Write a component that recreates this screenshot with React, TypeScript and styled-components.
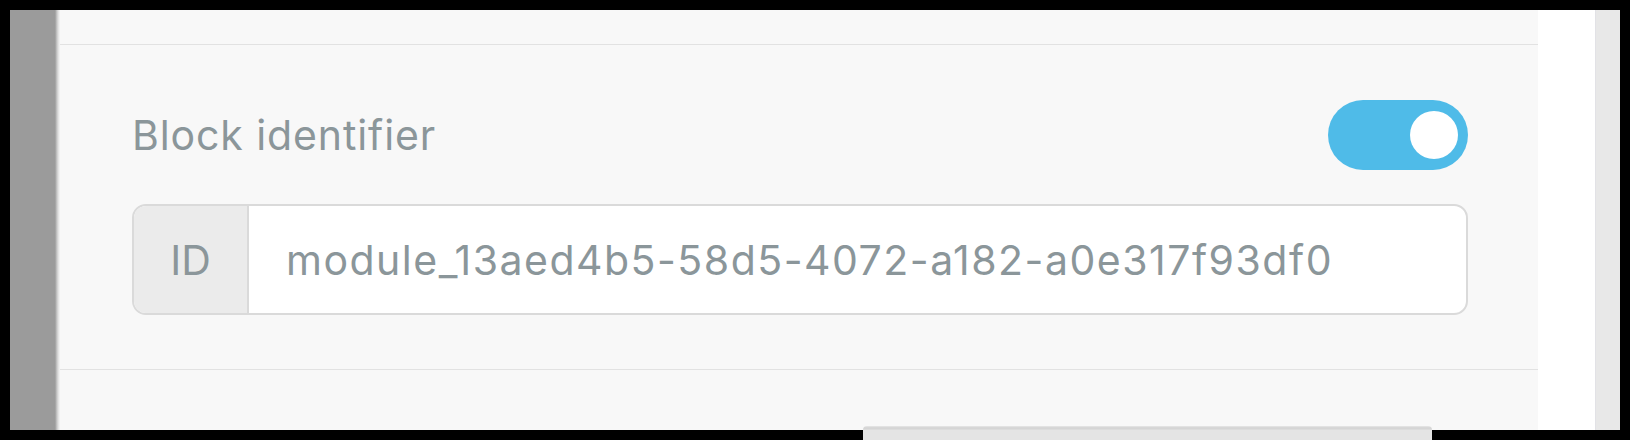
import React from "react";
import styled, { createGlobalStyle } from "styled-components";

const Global = createGlobalStyle`
  html, body { margin: 0; padding: 0; background: #000; }
  body { font-family: Inter, "Noto Sans", sans-serif; }
  * { box-sizing: border-box; }
`;

const Frame = styled.div`
  width: 1630px;
  height: 440px;
  padding: 10px;
  background: #000;
  display: flex;
  overflow: hidden;
`;

const Rail = styled.div`
  width: 50px;
  flex: none;
  background: linear-gradient(to right, #9b9b9b 0, #9b9b9b 45px, #c9c9c9 47px, #ececec 49px, #f4f4f4 50px);
`;

const Panel = styled.div`
  width: 1478px;
  flex: none;
  background: #f8f8f8;
  display: flex;
  flex-direction: column;
`;

const Gutter = styled.div`
  width: 57px;
  flex: none;
  background: #fff;
`;

const Scrollbar = styled.div`
  width: 25px;
  flex: none;
  background: #e8e8e8;
  border-left: 1px solid #e2e2e6;
`;

const TopSection = styled.div`
  height: 35px;
  flex: none;
  border-bottom: 1px solid #e2e2e2;
`;

const Section = styled.div`
  padding: 55px 70px 54px 72px;
  border-bottom: 1px solid #e2e2e2;
  display: flex;
  flex-direction: column;
  gap: 34px;
`;

const LabelRow = styled.div`
  display: flex;
  align-items: center;
  justify-content: space-between;
  height: 70px;
`;

const Label = styled.span`
  font-size: 41px;
  color: #8b969a;
  letter-spacing: 0.9px;
`;

const Toggle = styled.div<{ $on: boolean }>`
  width: 140px;
  height: 70px;
  border-radius: 35px;
  background: ${(p) => (p.$on ? "#4fbbe8" : "#cfcfcf")};
  display: flex;
  align-items: center;
  justify-content: ${(p) => (p.$on ? "flex-end" : "flex-start")};
  padding: 0 10px;
`;

const Knob = styled.div`
  width: 48px;
  height: 48px;
  border-radius: 50%;
  background: #fff;
`;

const InputGroup = styled.div`
  display: flex;
  height: 111px;
  border: 2px solid #dadada;
  border-radius: 14px;
  overflow: hidden;
  background: #fff;
`;

const Addon = styled.div`
  width: 115px;
  flex: none;
  background: #ebebeb;
  border-right: 2px solid #dadada;
  display: flex;
  align-items: center;
  justify-content: center;
  font-size: 41px;
  color: #8b969a;
`;

const Field = styled.div`
  flex: 1;
  display: flex;
  align-items: center;
  padding-left: 37px;
  font-size: 41px;
  color: #8b969a;
  letter-spacing: 1.5px;
  white-space: nowrap;
`;

const BottomSection = styled.div`
  flex: 1;
  display: flex;
  justify-content: flex-end;
  padding: 56px 106px 0 0;
`;

const ButtonGroup = styled.div`
  display: flex;
  width: 569px;
  height: 40px;
  border-radius: 4px 4px 0 0;
  background: linear-gradient(to bottom, #ececec 0, #d8d8d8 1px, #d4d4d4 3px, #e4e4e4 4px);
`;

export default function App() {
  return (
    <>
      <Global />
      <Frame>
        <Rail />
        <Panel>
          <TopSection />
          <Section>
            <LabelRow>
              <Label>Block identifier</Label>
              <Toggle $on>
                <Knob />
              </Toggle>
            </LabelRow>
            <InputGroup>
              <Addon>ID</Addon>
              <Field>module_13aed4b5-58d5-4072-a182-a0e317f93df0</Field>
            </InputGroup>
          </Section>
          <BottomSection>
            <ButtonGroup />
          </BottomSection>
        </Panel>
        <Gutter />
        <Scrollbar />
      </Frame>
    </>
  );
}
